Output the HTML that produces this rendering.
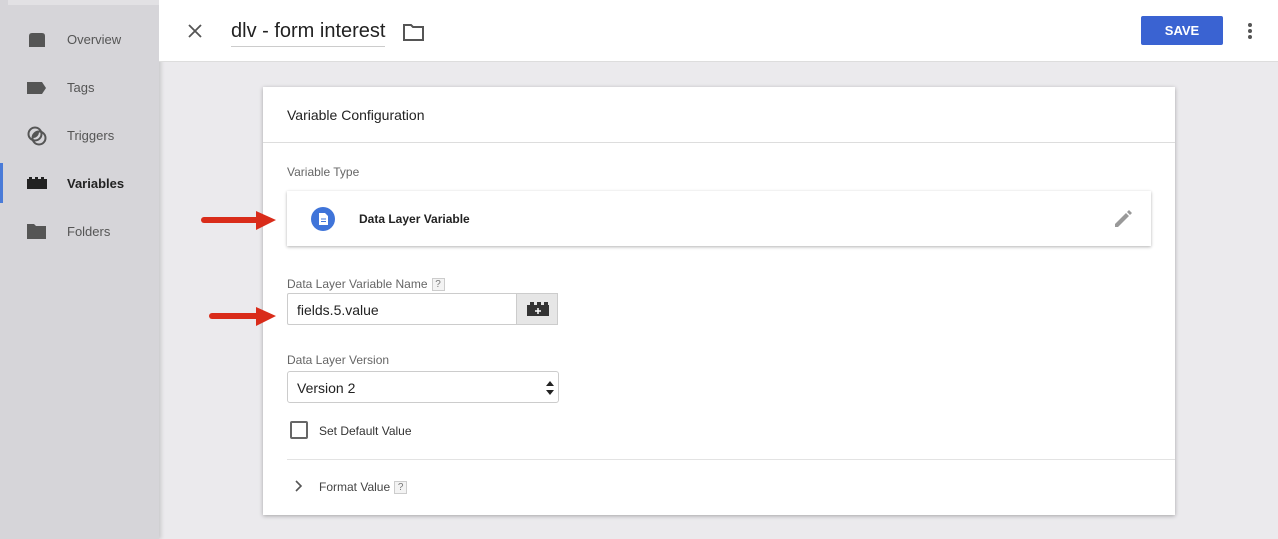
<!DOCTYPE html><html><head><style>
*{box-sizing:border-box;margin:0;padding:0}
body{width:1278px;height:539px;overflow:hidden;background:#ebeaed;font-family:"Liberation Sans",sans-serif;position:relative;color:#222}
.side{position:absolute;left:0;top:0;width:159px;height:539px;background:#d6d5d9;box-shadow:2px 0 4px rgba(0,0,0,.15)}
.side .top{position:absolute;left:8px;top:0;width:151px;height:5px;background:#e4e3e6}
.nav{position:absolute;left:67px;font-size:13px;color:#555}
.ic{position:absolute;left:27px}
.top{position:absolute;left:159px;top:0;width:1119px;height:62px;background:#fff;border-bottom:1px solid #ddd}
.card{position:absolute;left:263px;top:87px;width:912px;height:428px;background:#fff;box-shadow:0 1px 4px rgba(0,0,0,.3)}
.abs{position:absolute}
.lbl{font-size:12px;color:#666}
.q{display:inline-block;border:1px solid #ccc;background:#f3f3f3;color:#777;font-size:10px;width:13px;height:13px;line-height:11px;text-align:center;vertical-align:1px;margin-left:4px}
</style></head><body>
<div class="side"><div class="top" style="left:8px;width:151px;height:5px;background:#e2e1e4;border:0"></div>
<svg class="ic" style="top:32px" width="20" height="16"><path d="M2 4 Q2 1 5 1 H15 Q18 1 18 4 V15 H2Z" fill="#555"/></svg>
<div class="nav" style="top:32px">Overview</div>
<svg class="ic" style="top:82px" width="20" height="12"><path d="M0 0 H15 L19 6 L15 12 H0Z" fill="#555"/></svg>
<div class="nav" style="top:80px">Tags</div>
<svg class="ic" style="top:126px" width="20" height="20"><circle cx="8" cy="8" r="6.5" fill="none" stroke="#555" stroke-width="2"/><circle cx="12" cy="12" r="6.5" fill="none" stroke="#555" stroke-width="2"/><path d="M6 12 A6 6 0 0 0 12 6 A6 6 0 0 0 6 12" fill="#555"/></svg>
<div class="nav" style="top:128px">Triggers</div>
<div class="abs" style="left:0;top:163px;width:3px;height:40px;background:#4a7bd8"></div>
<svg class="ic" style="top:177px" width="20" height="12"><path d="M0 2 H2 V0 H5 V2 H8 V0 H11 V2 H14 V0 H17 V2 H20 V12 H0Z" fill="#222"/></svg>
<div class="nav" style="top:176px;color:#222;font-weight:bold">Variables</div>
<svg class="ic" style="top:224px" width="20" height="16"><path d="M0 0 H7 L9 2 H19 V15 H0Z" fill="#555"/></svg>
<div class="nav" style="top:224px">Folders</div>
</div>
<div class="top">
<svg class="abs" style="left:29px;top:24px" width="14" height="14"><path d="M1 1 L13 13 M13 1 L1 13" stroke="#555" stroke-width="1.8"/></svg>
<div class="abs" style="left:72px;top:20px;font-size:20px;color:#222;border-bottom:1px solid #ccc;padding-bottom:3px">dlv - form interest</div>
<svg class="abs" style="left:244px;top:24px" width="22" height="17"><path d="M1 1 H8 L10 3 H20 V16 H1Z" fill="none" stroke="#555" stroke-width="2"/></svg>
<div class="abs" style="left:982px;top:16px;width:82px;height:29px;background:#3a63d2;border-radius:2px;color:#fff;font-size:13px;font-weight:bold;text-align:center;line-height:29px">SAVE</div>
<svg class="abs" style="left:1088px;top:22px" width="6" height="18"><circle cx="3" cy="3" r="2" fill="#555"/><circle cx="3" cy="9" r="2" fill="#555"/><circle cx="3" cy="15" r="2" fill="#555"/></svg>
</div>
<div class="card">
<div class="abs" style="left:24px;top:20px;font-size:14px;color:#222">Variable Configuration</div>
<div class="abs" style="left:0;top:55px;width:912px;height:1px;background:#ddd"></div>
<div class="abs lbl" style="left:24px;top:78px">Variable Type</div>
<div class="abs" style="left:24px;top:104px;width:864px;height:55px;background:#fff;box-shadow:0 1px 3px rgba(0,0,0,.3)">
<svg class="abs" style="left:24px;top:16px" width="24" height="24"><circle cx="12" cy="12" r="12" fill="#3f74d9"/><path d="M8 6 H14 L17 9 V18 H8Z" fill="#fff"/><path d="M10 12 H15 M10 14.5 H15" stroke="#3f74d9" stroke-width="1"/></svg>
<div class="abs" style="left:72px;top:21px;font-size:12px;font-weight:bold;color:#222">Data Layer Variable</div>
<svg class="abs" style="left:826px;top:18px" width="20" height="20"><path d="M2 15 L13 4 L16 7 L5 18 H2Z M14 3 L16 1 L19 4 L17 6Z" fill="#999"/></svg>
</div>
<div class="abs lbl" style="left:24px;top:190px">Data Layer Variable Name<span class="q">?</span></div>
<div class="abs" style="left:24px;top:206px;width:271px;height:32px;border:1px solid #ccc;border-radius:2px 0 0 2px;font-size:14px;padding:8px 9px">fields.5.value</div>
<div class="abs" style="left:253px;top:206px;width:42px;height:32px;background:#e6e6e6;border:1px solid #ccc">
<svg class="abs" style="left:10px;top:8px" width="22" height="14"><path d="M0 3 H3 V0 H7 V3 H10 V0 H14 V3 H17 V0 H21 V3 H22 V14 H0Z" fill="#333"/><path d="M11 6 V12 M8 9 H14" stroke="#fff" stroke-width="1.5"/></svg></div>
<div class="abs lbl" style="left:24px;top:266px">Data Layer Version</div>
<div class="abs" style="left:24px;top:284px;width:272px;height:32px;border:1px solid #ccc;border-radius:3px;font-size:14px;padding:8px 9px">Version 2
<svg class="abs" style="left:258px;top:9px" width="8" height="14"><path d="M0 5 L4 0 L8 5Z M0 9 L4 14 L8 9Z" fill="#222"/></svg></div>
<div class="abs" style="left:27px;top:334px;width:18px;height:18px;border:2px solid #666;border-radius:2px"></div>
<div class="abs" style="left:56px;top:337px;font-size:12px;color:#333">Set Default Value</div>
<div class="abs" style="left:24px;top:372px;width:888px;height:1px;background:#e3e3e3"></div>
<svg class="abs" style="left:32px;top:393px" width="8" height="12"><path d="M1 1 L6 6 L1 11" fill="none" stroke="#555" stroke-width="1.6"/></svg>
<div class="abs" style="left:56px;top:393px;font-size:12px;color:#444">Format Value<span class="q">?</span></div>
</div>
<svg class="abs" style="left:200px;top:208px" width="78" height="26"><path d="M4 12 H60" stroke="#d92c1a" stroke-width="6" stroke-linecap="round"/><path d="M56 3 L76 12 L56 22Z" fill="#d92c1a"/></svg>
<svg class="abs" style="left:208px;top:303px" width="70" height="26"><path d="M4 13 H52" stroke="#d92c1a" stroke-width="6" stroke-linecap="round"/><path d="M48 4 L68 13 L48 23Z" fill="#d92c1a"/></svg>
</body></html>
